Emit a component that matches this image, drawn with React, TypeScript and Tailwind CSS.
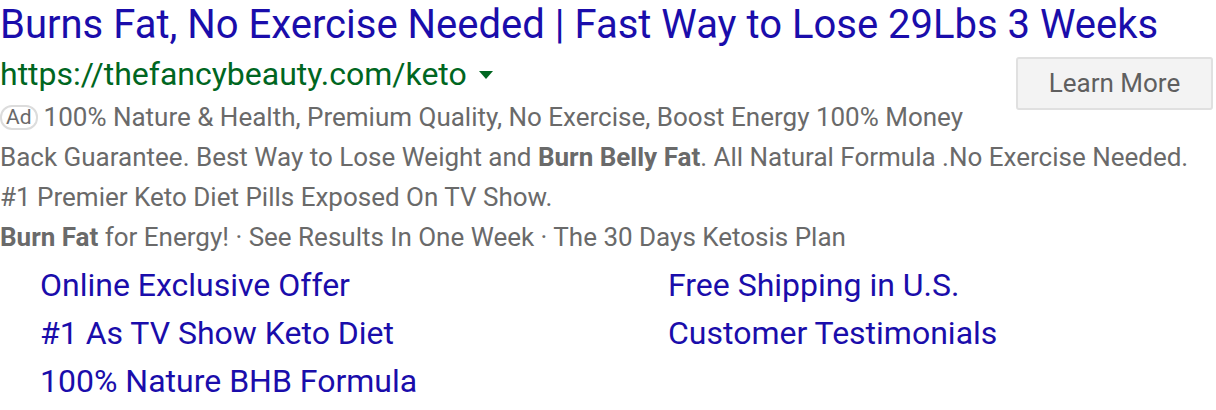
import React from "react";

const sitelinks = [
  "Online Exclusive Offer",
  "Free Shipping in U.S.",
  "#1 As TV Show Keto Diet",
  "Customer Testimonials",
  "100% Nature BHB Formula",
];

export default function App() {
  return (
    <div className="h-[410px] w-[1216px] overflow-hidden bg-white font-['Roboto',sans-serif]">
      <h3 className="whitespace-nowrap pt-[2px] text-[40px] leading-[46px] text-[#1a0dab]">
        Burns Fat, No Exercise Needed | Fast Way to Lose 29Lbs 3 Weeks
      </h3>

      <div>
        <button className="float-right mr-[3px] mt-[9px] h-[53px] w-[197px] rounded-[3px] border-2 border-[#e0e0e0] bg-[#f3f3f3] text-[26px] text-[#5f5f5f]">
          Learn More
        </button>

        <div className="mb-[3px] flex items-center pt-[6px] text-[32px] leading-[40px] text-[#006621]">
          <span>https://thefancybeauty.com/keto</span>
          <svg className="ml-[12px] mt-[2px]" width="14" height="8" viewBox="0 0 14 8">
            <path d="M0 0 L14 0 L7 8 Z" fill="#006621" />
          </svg>
        </div>

        <div className="text-[26px] leading-[40px] text-[#6a6a6a]">
          <p>
            <span className="mr-[6px] inline-block rounded-[12px] border-2 border-[#dcdcdc] px-[4px] align-[2px] text-[21px] leading-[21px]">
              Ad
            </span>
            100% Nature &amp; Health, Premium Quality, No Exercise, Boost Energy 100% Money
            Back Guarantee. Best Way to Lose Weight and{" "}
            <b className="font-bold">Burn Belly Fat</b>. All Natural Formula .No Exercise Needed.
            #1 Premier Keto Diet Pills Exposed On TV Show.
          </p>
          <p>
            <b className="font-bold">Burn Fat</b> for Energy! · See Results In One Week · The 30 Days
            Ketosis Plan
          </p>
        </div>
      </div>

      <div className="mt-[4px] grid grid-cols-[628px_1fr] pl-[40px] text-[32px] leading-[48px] text-[#1a0dab]">
        {sitelinks.map((s) => (
          <a key={s} href="#" className="whitespace-nowrap">
            {s}
          </a>
        ))}
      </div>
    </div>
  );
}
